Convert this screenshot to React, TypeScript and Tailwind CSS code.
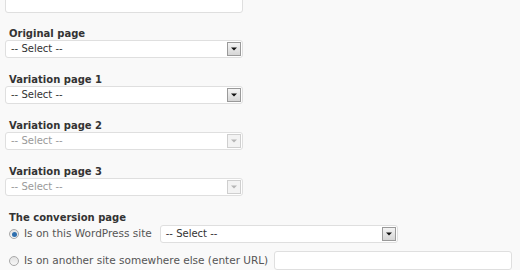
import React from "react";

function Arrow({ disabled }: { disabled?: boolean }) {
  return (
    <div
      className={
        disabled
          ? "w-[14px] h-[14px] border border-[#cfcfcf] bg-[#f3f3f3] flex items-center justify-center"
          : "w-[14px] h-[14px] border border-[#9a9a9a] bg-gradient-to-b from-[#f4f4f4] to-[#d6d6d6] flex items-center justify-center"
      }
    >
      <svg width="6" height="4" viewBox="0 0 6 4">
        <path d="M0 0.5 H6 L3 3.5 Z" fill={disabled ? "#b5b5b5" : "#111"} />
      </svg>
    </div>
  );
}

function Select({ disabled }: { disabled?: boolean }) {
  return (
    <div className="w-[238px] h-[18px] shrink-0 bg-white border border-[#dfdfdf] rounded-[3px] flex items-center justify-between pl-[5px] pr-[1px]">
      <span className={disabled ? "text-[10px] leading-[12px] text-[#9a9a9a]" : "text-[10px] leading-[12px] text-[#333]"}>
        -- Select --
      </span>
      <Arrow disabled={disabled} />
    </div>
  );
}

function Label({ children, first }: { children: React.ReactNode; first?: boolean }) {
  return (
    <div
      className={
        (first ? "mt-[14px]" : "mt-[15px]") +
        " h-[13px] leading-[13px] text-[10px] font-bold text-[#333] pl-[4px]"
      }
    >
      {children}
    </div>
  );
}

function Radio({ checked }: { checked?: boolean }) {
  return (
    <span className="w-[10px] h-[10px] shrink-0 rounded-full border border-[#a9a9a9] bg-gradient-to-b from-[#e2e2e2] to-[#f7f7f7] flex items-center justify-center">
      {checked && <span className="w-[5px] h-[5px] rounded-full bg-[#2f6fae]" />}
    </span>
  );
}

export default function App() {
  return (
    <div className="w-[520px] h-[270px] overflow-hidden bg-[#f9f9f9] pl-[5px] font-['DejaVu_Sans',Verdana,sans-serif]">
      <div className="w-[238px] h-[25px] mt-[-12px] bg-white border border-[#dfdfdf] rounded-[3px]" />

      <Label first>Original page</Label>
      <Select />

      <Label>Variation page 1</Label>
      <Select />

      <Label>Variation page 2</Label>
      <Select disabled />

      <Label>Variation page 3</Label>
      <Select disabled />

      <Label>The conversion page</Label>
      <div className="mt-[1px] flex items-center h-[18px] pl-[4px]">
        <Radio checked />
        <span className="ml-[5px] mr-[8px] text-[10.5px] text-[#555] whitespace-nowrap">Is on this WordPress site</span>
        <Select />
      </div>
      <div className="mt-[8px] flex items-center h-[19px] pl-[4px]">
        <Radio />
        <span className="ml-[5px] mr-[6px] text-[10.5px] text-[#555] whitespace-nowrap">
          Is on another site somewhere else (enter URL)
        </span>
        <div className="w-[238px] h-[19px] shrink-0 bg-white border border-[#dfdfdf] rounded-[3px]" />
      </div>
    </div>
  );
}
